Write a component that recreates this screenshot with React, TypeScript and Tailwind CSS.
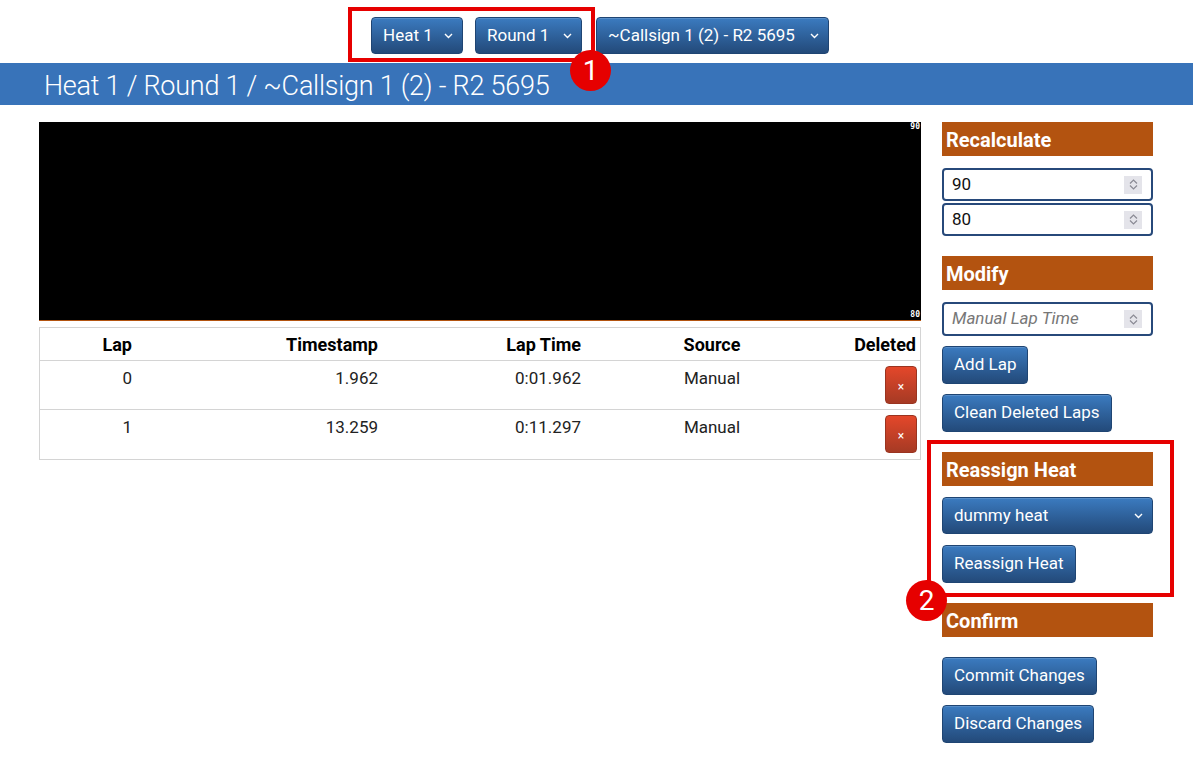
import React from 'react';

const font = { fontFamily: 'Roboto, "Noto Sans", sans-serif' };

const Chevron: React.FC<{ className?: string }> = ({ className }) => (
  <svg width="9" height="6" viewBox="0 0 9 6" fill="none" stroke="currentColor" strokeWidth="1.4" className={className}>
    <polyline points="1,1 4.5,4.5 8,1" />
  </svg>
);

const btn =
  'bg-gradient-to-b from-[#3b7bc0] to-[#234a7a] border border-[#1f4573] rounded-[4px] text-white text-[17px] whitespace-nowrap shadow-[inset_0_1px_0_rgba(255,255,255,0.15)]';

const Select: React.FC<{ label: string; className?: string }> = ({ label, className }) => (
  <div className={`${btn} h-[37px] flex items-center justify-between pl-[11px] pr-[9px] ${className ?? ''}`}>
    <span>{label}</span>
    <Chevron className="ml-2 shrink-0" />
  </div>
);

const Button: React.FC<{ label: string }> = ({ label }) => (
  <div className={`${btn} h-[38px] inline-flex items-center px-[11px] self-start`}>{label}</div>
);

const Header: React.FC<{ label: string; className?: string }> = ({ label, className }) => (
  <div className={`bg-[#b35310] h-[34px] flex items-center pl-[4px] pt-[1px] text-white font-bold text-[20px] ${className ?? ''}`}>
    {label}
  </div>
);

const Spinner = () => (
  <div className="w-[18px] h-[18px] bg-[#e4e4ea] flex flex-col items-center justify-center gap-[1px] text-[#8a8a94]">
    <svg width="9" height="5" viewBox="0 0 9 5" fill="none" stroke="currentColor" strokeWidth="1.2"><polyline points="1,4.5 4.5,1 8,4.5" /></svg>
    <svg width="9" height="5" viewBox="0 0 9 5" fill="none" stroke="currentColor" strokeWidth="1.2"><polyline points="1,0.5 4.5,4 8,0.5" /></svg>
  </div>
);

const NumInput: React.FC<{ value?: string; placeholder?: string; className?: string }> = ({ value, placeholder, className }) => (
  <div className={`border-2 border-[#27497a] rounded-[4px] bg-white flex items-center justify-between pl-[8px] pr-[9px] text-[17px] ${className ?? ''}`}>
    {value ? <span className="text-[#111]">{value}</span> : <span className="italic text-[#777]">{placeholder}</span>}
    <Spinner />
  </div>
);

const laps = [
  { lap: '0', ts: '1.962', time: '0:01.962', src: 'Manual' },
  { lap: '1', ts: '13.259', time: '0:11.297', src: 'Manual' },
];

const cols = 'grid grid-cols-[100px_246px_203px_246px_1fr]';

export default function App() {
  return (
    <div className="w-[1193px] h-[770px] bg-white relative overflow-hidden text-[#222]" style={font}>
      {/* Top selectors */}
      <div className="h-[63px] flex justify-center items-start pt-[17px] pl-[7px]">
        <Select label="Heat 1" className="w-[92px]" />
        <Select label="Round 1" className="w-[107px] ml-[12px]" />
        <Select label="~Callsign 1 (2) - R2 5695" className="w-[233px] ml-[14px]" />
      </div>

      {/* Title bar */}
      <div className="h-[42px] bg-[#3873b9] flex items-center pl-[44px] pt-[5px] text-white text-[27px] tracking-[-0.25px] font-light whitespace-nowrap">
        Heat 1 / Round 1 / ~Callsign 1 (2) - R2 5695
      </div>

      <div className="flex pl-[39px] pt-[17px] gap-[21px]">
        {/* Main column */}
        <div className="w-[882px] flex flex-col">
          <div className="h-[199px] bg-black border-b border-[#b35310] relative">
            <span className="absolute right-[1px] top-[1px] text-[8px] leading-none text-white font-bold" style={{ fontFamily: '"DejaVu Sans Mono", monospace' }}>90</span>
            <span className="absolute right-[1px] bottom-[1px] text-[8px] leading-none text-white font-bold" style={{ fontFamily: '"DejaVu Sans Mono", monospace' }}>80</span>
          </div>
          <div className="mt-[6px] border border-[#d4d4d4] text-[17px]">
            <div className={`${cols} h-[33px] items-center font-bold text-[18px] text-black border-b border-[#d4d4d4]`}>
              <div className="text-right pr-[8px]">Lap</div>
              <div className="text-right pr-[8px]">Timestamp</div>
              <div className="text-right pr-[8px]">Lap Time</div>
              <div className="text-center">Source</div>
              <div className="text-right pr-[4px]">Deleted</div>
            </div>
            {laps.map((l, i) => (
              <div key={l.lap} className={`${cols} h-[49px] ${i === 0 ? 'border-b border-[#d4d4d4]' : ''}`}>
                <div className="text-right pr-[8px] pt-[5px]">{l.lap}</div>
                <div className="text-right pr-[8px] pt-[5px]">{l.ts}</div>
                <div className="text-right pr-[8px] pt-[5px]">{l.time}</div>
                <div className="text-center pt-[5px]">{l.src}</div>
                <div className="flex justify-end pr-[3px] pt-[5px]">
                  <div className="w-[32px] h-[38px] rounded-[4px] bg-gradient-to-b from-[#e4472a] to-[#a63a24] border border-[#9a3420] flex items-center justify-center text-white text-[12px] pt-[4px]">
                    ×
                  </div>
                </div>
              </div>
            ))}
          </div>
        </div>

        {/* Sidebar */}
        <div className="w-[211px] flex flex-col">
          <Header label="Recalculate" />
          <NumInput value="90" className="mt-[12px] h-[33px]" />
          <NumInput value="80" className="mt-[2px] h-[33px]" />

          <Header label="Modify" className="mt-[20px]" />
          <NumInput placeholder="Manual Lap Time" className="mt-[12px] h-[34px]" />
          <div className="mt-[10px] flex"><Button label="Add Lap" /></div>
          <div className="mt-[10px] flex"><Button label="Clean Deleted Laps" /></div>

          <Header label="Reassign Heat" className="mt-[20px]" />
          <Select label="dummy heat" className="mt-[11px] w-full" />
          <div className="mt-[11px] flex"><Button label="Reassign Heat" /></div>

          <Header label="Confirm" className="mt-[20px]" />
          <div className="mt-[20px] flex"><Button label="Commit Changes" /></div>
          <div className="mt-[10px] flex"><Button label="Discard Changes" /></div>
        </div>
      </div>

      {/* Annotations */}
      <div className="absolute left-[348px] top-[7px] w-[247px] h-[55px] border-[4px] border-[#e60000]" />
      <div className="absolute left-[570px] top-[50px] w-[41px] h-[41px] rounded-full bg-[#e60000] text-white text-[28px] flex items-center justify-center">1</div>
      <div className="absolute left-[927px] top-[440px] w-[247px] h-[157px] border-[4px] border-[#e60000]" />
      <div className="absolute left-[906px] top-[580px] w-[41px] h-[41px] rounded-full bg-[#e60000] text-white text-[28px] flex items-center justify-center">2</div>
    </div>
  );
}
